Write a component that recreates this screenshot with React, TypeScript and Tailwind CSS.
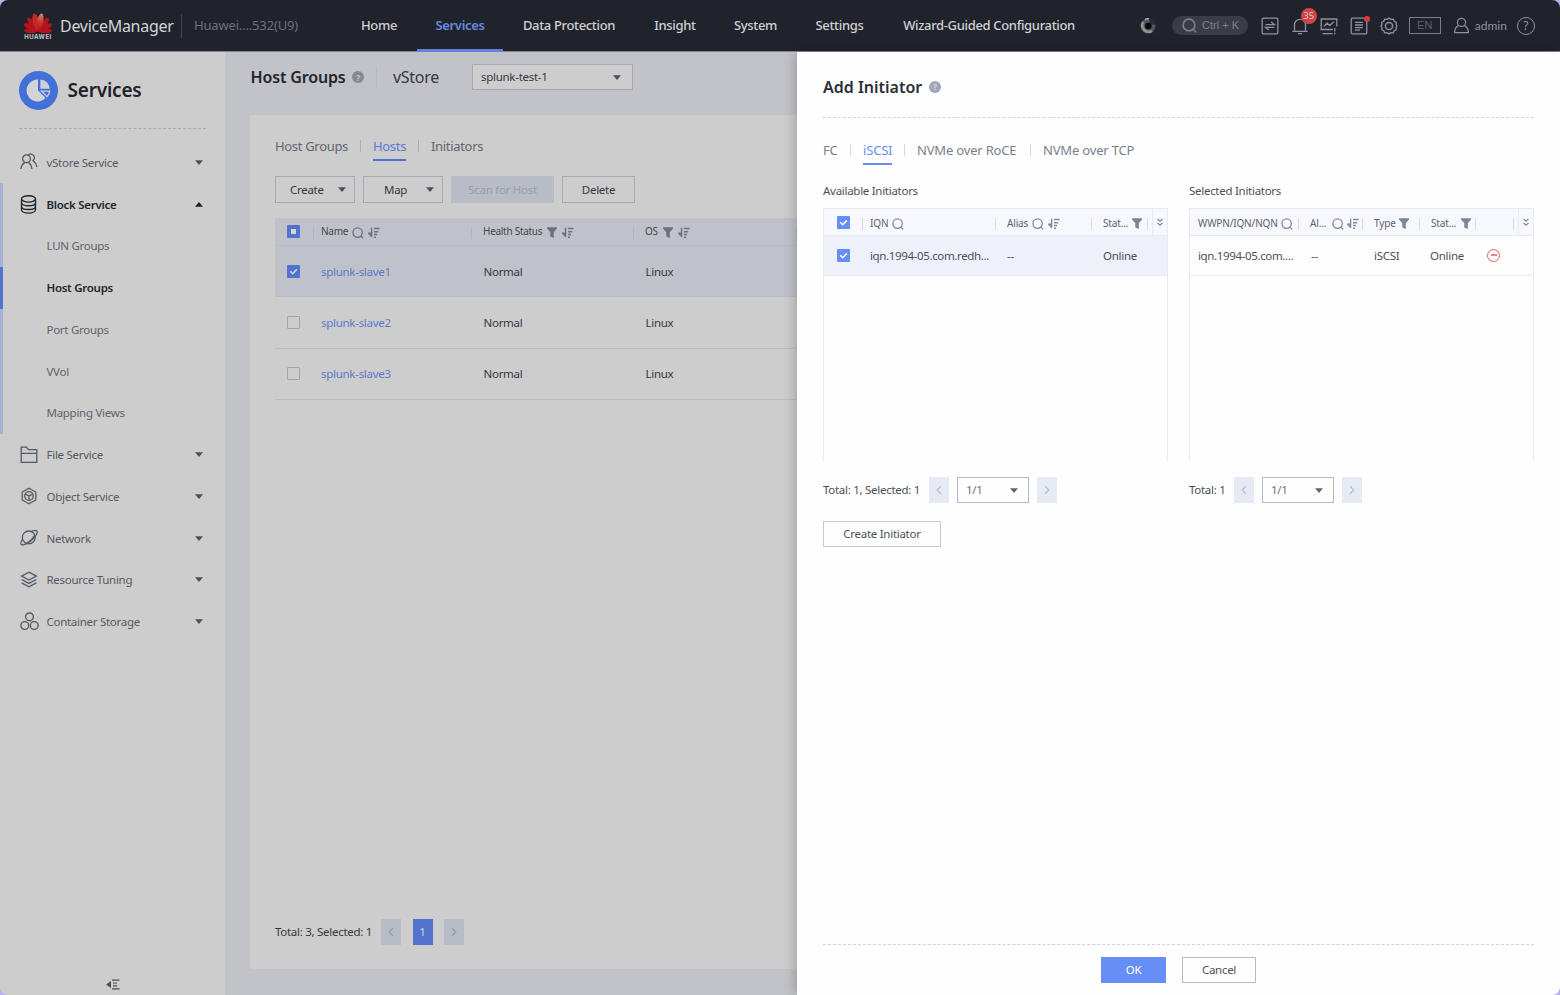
import type { ReactNode } from "react";
import clsx from "clsx";

// ---------- icons ----------

type IconProps = { className?: string };

const Svg = ({ className, box = "0 0 18 18", children }: { className?: string; box?: string; children: ReactNode }) => (
  <svg viewBox={box} fill="none" stroke="currentColor" strokeWidth="1.3" className={clsx("shrink-0", className)}>
    {children}
  </svg>
);

const Caret = ({ className, up }: IconProps & { up?: boolean }) => (
  <svg viewBox="0 0 8 5" fill="currentColor" className={clsx("w-2 h-[5px] shrink-0", up && "rotate-180", className)}>
    <path d="M0 0.3h8L4 5z" />
  </svg>
);

const SearchIcon = ({ className = "size-3" }: IconProps) => (
  <Svg box="0 0 12 12" className={className}>
    <circle cx="5.6" cy="5.6" r="4.7" />
    <path d="M8.8 9l2.4 2.4" />
  </Svg>
);

const FilterIcon = () => (
  <svg viewBox="0 0 10 11" fill="currentColor" className="w-2.5 h-[11px] shrink-0">
    <path d="M0 0.3h10v1.3L6.8 5.2V11L3.3 9.6V5.2L0 1.6z" />
  </svg>
);

const SortIcon = () => (
  <Svg box="0 0 12 11" className="w-3 h-[11px]">
    <path d="M3.6 0.8v9M3.8 9.8L0.6 6.2h3" strokeWidth="1.4" />
    <path d="M6 1.5h5.6M6 4.7h4.2M6 7.6h3M6 10.2h2" strokeWidth="1.5" />
  </Svg>
);

const HelpDot = () => (
  <span className="size-3 rounded-full bg-current flex items-center justify-center shrink-0">
    <span className="text-[9px] leading-none font-bold text-white/50">?</span>
  </span>
);

const DoubleChevron = () => (
  <Svg box="0 0 8 9" className="w-2 h-[9px]">
    <path d="M1.5 1L4 3.2 6.5 1M1.5 5L4 7.2 6.5 5" />
  </Svg>
);

const Chevron = ({ right }: { right?: boolean }) => (
  <Svg box="0 0 6 10" className={clsx("w-1.5 h-2.5", right && "rotate-180")}>
    <path d="M5 1L1.2 5 5 9" />
  </Svg>
);

const petal = "M14 19.6C10.2 14 10 3.4 13.4 1.2q.6-.4 1.200 0C18 3.400 17.800 14 14 19.600z";

const HuaweiLogo = () => (
  <div className="w-7 flex flex-col items-center">
    <svg viewBox="0 0 28 21" className="w-7 h-[21px]">
      <defs>
        <linearGradient id="petal" x1="0" y1="0" x2="0" y2="1">
          <stop offset="0" stopColor="#d08a72" />
          <stop offset="0.5" stopColor="#c4352a" />
          <stop offset="1" stopColor="#b3101c" />
        </linearGradient>
      </defs>
      <g fill="#b3141e">
        <path d={petal} transform="rotate(-86 14 19.6) translate(3.500 4.900) scale(.75)" />
        <path d={petal} transform="rotate(86 14 19.6) translate(3.500 4.900) scale(.75)" />
        <path d={petal} transform="rotate(-61 14 19.6) translate(2.100 2.900) scale(.85)" />
        <path d={petal} transform="rotate(61 14 19.6) translate(2.100 2.900) scale(.85)" />
        <path d={petal} transform="rotate(-37 14 19.6) translate(1 1.400) scale(.93)" />
        <path d={petal} transform="rotate(37 14 19.6) translate(1 1.400) scale(.93)" />
      </g>
      <path d={petal} transform="rotate(-12 14 19.6)" fill="#c22a26" />
      <path d={petal} transform="rotate(12 14 19.6)" fill="url(#petal)" />
    </svg>
    <span className="font-['Inter',sans-serif] font-bold text-[6px] leading-[7px] tracking-[0.55px] text-[#c9cacc]">HUAWEI</span>
  </div>
);

const TenantIcon = () => (
  <Svg className="size-[18px]">
    <circle cx="6.5" cy="5.8" r="3.9" />
    <path d="M0.9 16c.3-3 1.6-5 3.7-6.4M8.6 9.6c2 1.3 3 3.500 3.300 6.400M8 2.300C9 1 11 .8 12.400 1.500c2.300 1.200 2.800 4.200.6 6.200 2 1.200 3.400 3.300 3.900 6.300" />
  </Svg>
);

const DatabaseIcon = () => (
  <Svg className="size-[19px]">
    <ellipse cx="9" cy="3.7" rx="6.6" ry="3" />
    <path d="M2.4 3.7v10.500c0 1.700 3 3 6.600 3s6.600-1.300 6.600-3V3.700M2.400 7.400c0 1.700 3 2.800 6.600 2.800s6.600-1.100 6.600-2.800M2.400 10.900c0 1.700 3 2.800 6.600 2.800s6.600-1.100 6.600-2.800" />
  </Svg>
);

const FolderIcon = () => (
  <Svg className="size-[18px]">
    <path d="M1.2 16.4V1.2h5.3l1.9 2.500h8.400v12.700zM1.200 7.300h15.600" />
  </Svg>
);

const ObjectIcon = () => (
  <Svg className="size-[18px]">
    <path d="M9 1.2l6.800 3.800v8L9 16.800 2.200 13V5z" strokeLinejoin="round" />
    <circle cx="9" cy="9" r="4.3" />
    <path d="M5.200 7L9 8.900 12.800 7M9 8.900v4.400" />
  </Svg>
);

const PlanetIcon = () => (
  <Svg className="size-[18px]">
    <circle cx="8.8" cy="8.4" r="6.4" />
    <path d="M11.5 2.5C14.5.9 17 1 17.2 2.6c.3 2.600-3.500 7.300-7.700 10.300-3.800 2.700-7.700 3.700-8.500 2.200-.5-1 .2-2.900 1.500-4.800M14.800 6.200c-1.300 2.300-4 5.300-7.300 7.600" />
  </Svg>
);

const LayersIcon = () => (
  <Svg className="size-[18px]">
    <path d="M9 1.2l7.4 3.900L9 9 1.600 5.100zM1.600 8.500L9 12.400l7.400-3.900M1.600 11.900L9 15.800l7.400-3.900" />
  </Svg>
);

const ContainerIcon = () => (
  <Svg className="size-[19px]">
    <circle cx="9" cy="4.6" r="3.7" />
    <circle cx="4.5" cy="12.8" r="3.7" />
    <circle cx="13.5" cy="12.8" r="3.7" />
  </Svg>
);

const TransferIcon = () => (
  <Svg className="size-[18px]">
    <rect x="1.2" y="1.2" width="15.6" height="15.6" rx="1" />
    <path d="M4.5 7.600h9L10.200 5M13.500 10.400h-9L7.800 13" />
  </Svg>
);

const BellIcon = () => (
  <Svg className="size-[18px]">
    <path d="M1.5 14.300h15M3.500 14.300V8c0-3.400 2.400-5.600 5.500-5.600s5.500 2.200 5.500 5.600v6.300M7 16.600h4" />
  </Svg>
);

const MonitorIcon = () => (
  <Svg className="size-[18px]">
    <path d="M16.800 9.500V2H1.200v10.500h11.500M4 9.200l3.200-3 2.500 2.300L13.800 4.800M2.500 16.600h10.300M14.800 11v3.500M14.800 15.800v1.400" />
  </Svg>
);

const TaskIcon = () => (
  <Svg className="size-[18px]">
    <rect x="1.2" y="1.2" width="15.6" height="15.6" rx="1" />
    <path d="M5 5.400h8M5 8h8M5 10.600h8M5 13.200h5" />
  </Svg>
);

const GearIcon = () => (
  <Svg className="size-[18px]">
    <path d="M9 1.100l2 1.200 2.300-.2 1 2.100 2 1.100-.2 2.300L17 9l-.9 1.400.2 2.300-2 1.100-1 2.100-2.300-.2-2 1.200-2-1.200-2.300.2-1-2.100-2-1.100.2-2.300L1 9l.9-1.400-.2-2.300 2-1.100 1-2.100 2.300.2z" />
    <circle cx="9" cy="9" r="3.600" strokeWidth="1.500" />
  </Svg>
);

const UserIcon = () => (
  <Svg className="size-[17px]">
    <circle cx="9" cy="5.700" r="4.300" />
    <path d="M5.500 9.200C3 10.700 1.700 13 1.700 16.500h14.600c0-3.500-1.300-5.800-3.800-7.300" />
  </Svg>
);

// ---------- shared pieces ----------

const Divider = ({ className }: IconProps) => <span className={clsx("w-px h-3 shrink-0", className)} />;

const Checkbox = ({ state, dim }: { state: "on" | "off" | "partial"; dim?: boolean }) => (
  <span
    className={clsx(
      "size-[13px] rounded-[1px] shrink-0 flex items-center justify-center",
      state === "off" ? "border border-[#a3a4a8]" : dim ? "bg-[#5172cd]" : "bg-[#678ef7]"
    )}
  >
    {state === "partial" && <span className="size-[5px] bg-[#d2d4dc]" />}
    {state === "on" && (
      <svg viewBox="0 0 13 13" fill="none" stroke={dim ? "#d2d4dc" : "#fff"} strokeWidth="1.6" className="size-[13px]">
        <path d="M3.300 6.300l2.400 2.400 4.200-4.300" />
      </svg>
    )}
  </span>
);

type TabItem = { label: string; width: string };

const Tabs = ({ items, active, dim }: { items: TabItem[]; active: string; dim?: boolean }) => (
  <div className="flex h-6 items-start text-[13px] leading-[18px]">
    {items.map((t, i) => (
      <div key={t.label} className="flex items-start">
        {i > 0 && <Divider className={clsx("mx-3 mt-[3px]", dim ? "bg-[#acaeb8]" : "bg-[#d5d9e6]")} />}
        <span
          className={clsx(
            "h-6 whitespace-nowrap border-b-2",
            t.width,
            dim ? "tracking-[-0.32px]" : "tracking-[-0.18px]",
            t.label === active
              ? dim
                ? "text-[#5b7bd3] border-[#5172cd]"
                : "text-[#678ef7] border-[#678ef7]"
              : dim
                ? "text-[#63666e] border-transparent"
                : "text-[#7b7f8c] border-transparent"
          )}
        >
          {t.label}
        </span>
      </div>
    ))}
  </div>
);

const PageArrow = ({ right, dim }: { right?: boolean; dim?: boolean }) => (
  <span
    className={clsx(
      "w-5 h-[26px] flex items-center justify-center",
      dim ? "bg-[#b8bcc7] text-[#989ca8]" : "bg-[#e6eaf5] text-[#b9bfcf]"
    )}
  >
    <Chevron right={right} />
  </span>
);

// ---------- header ----------

const navItems = [
  { label: "Home", width: "w-[76px]" },
  { label: "Services", width: "w-[86px]" },
  { label: "Data Protection", width: "w-[132px]" },
  { label: "Insight", width: "w-[80px]" },
  { label: "System", width: "w-[81px]" },
  { label: "Settings", width: "w-[87px]" },
  { label: "Wizard-Guided Configuration", width: "w-[212px]" },
];

const Header = () => (
  <header className="h-[52px] flex items-center bg-[#20232b] border-b border-[#85878c] text-[#8f929c] shrink-0">
    <div className="w-[341px] flex items-center pl-6">
      <HuaweiLogo />
      <span className="ml-2 w-[114px] whitespace-nowrap text-[16px] tracking-[-0.28px] text-[#d3d4d7]">DeviceManager</span>
      <span className="ml-[7px] w-px h-6 bg-[#43464f]" />
      <span className="ml-3 whitespace-nowrap text-[13px] tracking-[-0.17px] text-[#6d717b]">Huawei....532(U9)</span>
    </div>
    <nav className="flex h-full text-[13px] tracking-[-0.34px]">
      {navItems.map((n) => (
        <span
          key={n.label}
          className={clsx(
            "flex items-center justify-center whitespace-nowrap pt-[3px] border-b-[3px] h-[52px]",
            n.width,
            n.label === "Services" ? "text-[#6888e0] font-semibold border-[#6381d6]" : "text-[#d0d1d4] font-medium border-transparent"
          )}
        >
          {n.label}
        </span>
      ))}
    </nav>
    <div className="flex-1 flex items-center pl-[45px]">
      <svg viewBox="0 0 16 16" className="size-4">
        <circle cx="8" cy="8" r="7.5" fill="#55565a" />
        <path d="M3.200 4a6.500 6.500 0 0 0 8.800 9" fill="none" stroke="#939496" strokeWidth="2.500" />
        <path d="M5 1.500a7.500 7.500 0 0 1 4-.8" fill="none" stroke="#a5a6a8" strokeWidth="1.500" />
        <path d="M9 .6a7.500 7.500 0 0 1 6.400 6.400L10 6z" fill="#2c2d32" />
        <circle cx="8.400" cy="8" r="3.300" fill="#08090b" />
      </svg>
      <span className="ml-4 w-[76px] h-[19px] rounded-full bg-[#3a3d47] flex items-center pl-[10px] gap-[5px] text-[#7d808b]">
        <SearchIcon className="size-[15px]" />
        <span className="font-['Liberation_Sans',sans-serif] text-[11px] whitespace-nowrap">Ctrl + K</span>
      </span>
      <span className="ml-[13px] flex items-center gap-[11.7px]">
        <TransferIcon />
        <span className="relative flex">
          <BellIcon />
          <span className="absolute left-[10px] top-[-9px] size-4 rounded-full bg-[#cf4347] text-[#e3c8ca] text-[9.5px] leading-4 text-center">35</span>
        </span>
        <MonitorIcon />
        <span className="relative flex">
          <TaskIcon />
          <span className="absolute right-[-2px] top-[-1px] size-1.5 rounded-full bg-[#dc3a3c]" />
        </span>
        <GearIcon />
      </span>
      <span className="ml-[11px] w-8 h-[17px] border border-[#7b7e89] flex items-center justify-center font-['Liberation_Sans',sans-serif] text-[11px] text-[#5d606b]">EN</span>
      <span className="ml-3 flex items-center gap-[5px]">
        <UserIcon />
        <span className="w-8 whitespace-nowrap font-['Lato',sans-serif] text-[12px]">admin</span>
      </span>
      <span className="ml-[10px] size-[18px] rounded-full border-[1.5px] border-[#8f929c] flex items-center justify-center text-[12px] leading-none">?</span>
    </div>
  </header>
);

// ---------- sidebar ----------

const blockItems = ["LUN Groups", "Host Groups", "Port Groups", "VVol", "Mapping Views"];

const otherServices = [
  { label: "File Service", icon: <FolderIcon /> },
  { label: "Object Service", icon: <ObjectIcon /> },
  { label: "Network", icon: <PlanetIcon /> },
  { label: "Resource Tuning", icon: <LayersIcon /> },
  { label: "Container Storage", icon: <ContainerIcon /> },
];

const ServiceRow = ({ label, icon, open }: { label: string; icon: ReactNode; open?: boolean }) => (
  <div className={clsx("h-[41.75px] flex items-center pr-[22px]", open ? "text-[#23252b] font-semibold" : "text-[#555962]")}>
    <span className={clsx("w-[46.5px] flex", open ? "pl-[19px]" : "pl-5")}>{icon}</span>
    <span className="flex-1 whitespace-nowrap">{label}</span>
    <Caret up={open} className={open ? "text-[#1c1e24]" : "text-[#4a4f5c]"} />
  </div>
);

const Sidebar = () => (
  <aside className="w-[225px] shrink-0 bg-[#cdcdcd] flex flex-col text-[11.5px] tracking-[-0.28px]">
    <div className="h-[76px] flex items-center pl-[19px]">
      <span className="size-[39px] rounded-full bg-[#4370d6] flex items-center justify-center">
        <svg viewBox="0 0 26 26" className="size-[26px]">
          <path d="M12 2.5v11l7.500 7.600A11 11 0 1 1 12 2.500z" fill="#d2d4d8" />
          <path d="M14.300 2.500v9.200h9.500A10 10 0 0 0 14.300 2.500z" fill="#cdd0d8" />
          <path d="M15.500 14.200h8.200a9.500 9.500 0 0 1-2.700 5.500z" fill="none" stroke="#cdd0d8" strokeWidth="1.3" />
        </svg>
      </span>
      <span className="ml-[9.5px] text-[19px] tracking-[-0.2px] font-semibold text-[#202228]">Services</span>
    </div>
    <div className="mx-[19px] mb-[12.5px] border-t border-dashed border-[#a9abb8]" />
    <ServiceRow label="vStore Service" icon={<TenantIcon />} />
    <div className="relative">
      <ServiceRow label="Block Service" icon={<DatabaseIcon />} open />
      <span className="absolute inset-y-0 left-0 w-[3px] bg-[#a7b1d4]" />
      {blockItems.map((label) => (
        <div
          key={label}
          className={clsx(
            "relative h-[41.75px] flex items-center pl-[43.5px] border-l-[3px]",
            label === "Host Groups" ? "border-[#5172cd] text-[#23252b] font-semibold" : "border-[#a7b1d4] text-[#5f636b]"
          )}
        >
          {label}
        </div>
      ))}
    </div>
    {otherServices.map((s) => (
      <ServiceRow key={s.label} label={s.label} icon={s.icon} />
    ))}
    <div className="mt-auto flex justify-center pb-[5px] text-[#4a4f5c]">
      <svg viewBox="0 0 14 11" className="w-3.5 h-[11px]" fill="currentColor">
        <path d="M0 5.500L5 2v7zM6 .5h7.500v1.300H6zM7 3.400h4v1.200H7zM7 6.300h4v1.200H7zM6 9.200h7.500v1.300H6z" />
      </svg>
    </div>
  </aside>
);

// ---------- host list ----------

const hosts = [
  { name: "splunk-slave1", checked: true },
  { name: "splunk-slave2", checked: false },
  { name: "splunk-slave3", checked: false },
];

const hostTabs: TabItem[] = [
  { label: "Host Groups", width: "w-[73px]" },
  { label: "Hosts", width: "w-[33px]" },
  { label: "Initiators", width: "w-[52px]" },
];

const HostTable = () => (
  <div className="mt-[15px]">
    <div className="h-7 flex items-center bg-[#c0c2ca] border-b border-[#bbbdc6] text-[10px] text-[#43464e]">
      <span className="w-[38px] pl-3"><Checkbox state="partial" dim /></span>
      <Divider className="mt-0.5 bg-[#b2b4bd]" />
      <span className="w-[157px] pl-[7px] flex items-center gap-1">
        <span className="w-[27px]">Name</span>
        <span className="flex items-center gap-1 pt-0.5 text-[#6c7080]"><SearchIcon /><SortIcon /></span>
      </span>
      <Divider className="mt-0.5 bg-[#b2b4bd]" />
      <span className="w-[161px] pl-[11px] flex items-center gap-1">
        <span className="w-[60px] whitespace-nowrap">Health Status</span>
        <span className="flex items-center gap-[5px] pt-0.5 text-[#6c7080]"><FilterIcon /><SortIcon /></span>
      </span>
      <Divider className="mt-0.5 bg-[#b2b4bd]" />
      <span className="w-[162px] pl-[11px] flex items-center gap-1">
        <span className="w-[14px]">OS</span>
        <span className="flex items-center gap-[5px] pt-0.5 text-[#6c7080]"><FilterIcon /><SortIcon /></span>
      </span>
      <Divider className="mt-0.5 bg-[#b2b4bd]" />
    </div>
    {hosts.map((h) => (
      <div key={h.name} className={clsx("h-[51.4px] flex items-center border-b border-[#bbbec9]", h.checked && "bg-[#c0c2ca]")}>
        <span className="w-[46px] pl-3"><Checkbox state={h.checked ? "on" : "off"} dim /></span>
        <span className="w-[162.5px] text-[#5b78cb]">{h.name}</span>
        <span className="w-[162px]">Normal</span>
        <span>Linux</span>
      </div>
    ))}
  </div>
);

const HostPage = () => (
  <main className="w-[572px] shrink-0 bg-[#c2c3c9] flex flex-col pl-[25px] pb-[26px] overflow-hidden text-[11.5px] tracking-[-0.28px] text-[#35383f]">
    <div className="h-[63px] flex items-start pt-3">
      <div className="flex items-center h-[26px]">
        <span className="w-[95px] pl-[0.5px] whitespace-nowrap text-[16px] tracking-[-0.15px] font-semibold text-[#23252b]">Host Groups</span>
        <span className="ml-[7px] text-[#858893]"><HelpDot /></span>
        <span className="ml-3 w-px h-[22px] bg-[#b6b8c2]" />
        <span className="ml-4 w-[46px] text-[16px]">vStore</span>
        <span className="ml-[33px] w-[161px] h-[26px] border border-[#a5a8b5] bg-[#cdcdcd] flex items-center justify-between pl-2 pr-[11px]">
          splunk-test-1
          <Caret className="text-[#4a4f5c]" />
        </span>
      </div>
    </div>
    <section className="flex-1 bg-[#cdcdcd] pl-[25px] pt-[22px] flex flex-col">
      <Tabs items={hostTabs} active="Hosts" dim />
      <div className="mt-[15px] flex gap-2">
        <span className="w-20 h-[27px] border border-[#a5a8b5] flex items-center justify-between pl-[14px] pr-2">
          Create <Caret className="text-[#4a4f5c]" />
        </span>
        <span className="w-20 h-[27px] border border-[#a5a8b5] flex items-center justify-between pl-5 pr-2">
          Map <Caret className="text-[#4a4f5c]" />
        </span>
        <span className="w-[103px] h-[27px] bg-[#b8bcc7] flex items-center justify-center text-[#999da8]">Scan for Host</span>
        <span className="w-[73px] h-[27px] border border-[#a5a8b5] flex items-center justify-center">Delete</span>
      </div>
      <HostTable />
      <div className="mt-auto pb-6 flex items-center">
        <span className="w-[98px] whitespace-nowrap">Total: 3, Selected: 1</span>
        <span className="ml-2 flex gap-[11.5px]">
          <PageArrow dim />
          <span className="w-5 h-[26px] bg-[#5172cd] text-[#cfd3de] flex items-center justify-center">1</span>
          <PageArrow right dim />
        </span>
      </div>
    </section>
  </main>
);

// ---------- drawer ----------

const initiatorTabs: TabItem[] = [
  { label: "FC", width: "w-[15px]" },
  { label: "iSCSI", width: "w-[29px]" },
  { label: "NVMe over RoCE", width: "w-[101px]" },
  { label: "NVMe over TCP", width: "w-[92px]" },
];

const HeadDivider = ({ className }: IconProps) => <Divider className={clsx("mt-[3px] bg-[#d5d9e6]", className)} />;

const Pager = ({ summary, width }: { summary: string; width: string }) => (
  <div className="mt-4 flex items-center">
    <span className={clsx("whitespace-nowrap", width)}>{summary}</span>
    <span className="ml-2 flex gap-2">
      <PageArrow />
      <span className="w-[72px] h-[26px] border border-[#b3bacb] flex items-center justify-between pl-2 pr-[10px] text-[#6c7080]">
        1/1
        <Caret className="text-[#5d6475]" />
      </span>
      <PageArrow right />
    </span>
  </div>
);

const AvailableTable = () => (
  <div className="w-[345px] h-[253px] border border-b-0 border-[#e6eaf5]">
    <div className="h-[27px] flex items-center bg-[#f7f8fd] border-b border-[#e6eaf5] text-[10px] tracking-[-0.15px] text-[#5d616c]">
      <span className="w-[38px] pl-[12.5px]"><Checkbox state="on" /></span>
      <HeadDivider />
      <span className="w-[132px] pt-[3px] pl-[7px] flex items-center gap-[5px]">
        <span className="w-[17px]">IQN</span>
        <span className="text-[#858a9b]"><SearchIcon /></span>
      </span>
      <HeadDivider />
      <span className="w-[95px] pt-[3px] pl-[11px] flex items-center gap-[5px]">
        <span className="w-5">Alias</span>
        <span className="flex items-center gap-1 text-[#858a9b]"><SearchIcon /><SortIcon /></span>
      </span>
      <HeadDivider />
      <span className="w-[55px] pt-[3px] pl-[11px] flex items-center gap-1">
        <span className="w-[25px]">Stat...</span>
        <span className="text-[#7f8599]"><FilterIcon /></span>
      </span>
      <HeadDivider />
      <span className="ml-1 flex-1 h-full border-l border-[#e6eaf5] flex items-center justify-center text-[#858a9b]"><DoubleChevron /></span>
    </div>
    <div className="h-[39.5px] flex items-center bg-[#eef1fa] border-b border-[#e6eaf5]">
      <span className="w-[46px] pl-[12.5px]"><Checkbox state="on" /></span>
      <span className="w-[137px] whitespace-nowrap tracking-[-0.36px]">iqn.1994-05.com.redh...</span>
      <span className="w-[96px]">--</span>
      <span>Online</span>
    </div>
  </div>
);

const SelectedTable = () => (
  <div className="w-[345px] h-[253px] border border-b-0 border-[#e6eaf5]">
    <div className="h-[27px] flex items-center bg-[#f7f8fd] border-b border-[#e6eaf5] text-[10px] tracking-[-0.15px] text-[#5d616c]">
      <span className="w-[108px] pt-[3px] pl-2 flex items-center gap-1">
        <span className="w-[79px] whitespace-nowrap">WWPN/IQN/NQN</span>
        <span className="text-[#858a9b]"><SearchIcon /></span>
      </span>
      <HeadDivider />
      <span className="w-[63px] pt-[3px] pl-[11px] flex items-center gap-[5px]">
        <span className="w-[17px]">Al...</span>
        <span className="flex items-center gap-[3px] text-[#858a9b]"><SearchIcon /><SortIcon /></span>
      </span>
      <HeadDivider />
      <span className="w-[56px] pt-[3px] pl-[11px] flex items-center gap-1">
        <span className="w-[21px]">Type</span>
        <span className="text-[#7f8599]"><FilterIcon /></span>
      </span>
      <HeadDivider />
      <span className="w-[55px] pt-[3px] pl-[11px] flex items-center gap-1">
        <span className="w-[26px]">Stat...</span>
        <span className="text-[#7f8599]"><FilterIcon /></span>
      </span>
      <HeadDivider />
      <HeadDivider className="ml-[37px]" />
      <span className="ml-1 flex-1 h-full border-l border-[#e6eaf5] flex items-center justify-center text-[#858a9b]"><DoubleChevron /></span>
    </div>
    <div className="h-[39.5px] flex items-center border-b border-[#e6eaf5]">
      <span className="w-[121px] pl-2 whitespace-nowrap tracking-[-0.36px]">iqn.1994-05.com....</span>
      <span className="w-[63px]">--</span>
      <span className="w-[56px]">iSCSI</span>
      <span className="w-[57px]">Online</span>
      <span className="size-[13px] rounded-full border-[1.5px] border-[#f0595c] flex items-center justify-center text-[#f0595c]">
        <Svg box="0 0 6 2" className="w-1.5 h-0.5">
          <path d="M0 1h6" strokeWidth="1.5" />
        </Svg>
      </span>
    </div>
  </div>
);

const Drawer = () => (
  <section className="relative flex-1 bg-[#fefefe] px-[26px] flex flex-col text-[11.5px] tracking-[-0.28px] text-[#4c505a] shadow-[-2px_0_12px_rgba(0,0,0,0.22)]">
    <div className="h-[66px] flex items-center pt-1 border-b border-dashed border-[#cfd3e0]">
      <span className="w-[99px] whitespace-nowrap text-[16px] tracking-normal font-semibold text-[#2b2e36]">Add Initiator</span>
      <span className="ml-[7px] text-[#a2a6b5]"><HelpDot /></span>
    </div>
    <div className="mt-[23px]">
      <Tabs items={initiatorTabs} active="iSCSI" />
    </div>
    <div className="mt-[17px] flex gap-[21px]">
      <div>
        <p className="h-[26px] leading-[18px]">Available Initiators</p>
        <AvailableTable />
        <Pager summary="Total: 1, Selected: 1" width="w-[98px]" />
        <span className="mt-[18px] w-[118px] h-[26px] border border-[#c3c9d8] flex items-center justify-center">Create Initiator</span>
      </div>
      <div>
        <p className="h-[26px] leading-[18px]">Selected Initiators</p>
        <SelectedTable />
        <Pager summary="Total: 1" width="w-[37px]" />
      </div>
    </div>
    <div className="mt-auto h-[51px] flex justify-center gap-4 pt-3 border-t border-dashed border-[#cfd3e0]">
      <span className="w-[65px] h-[26px] bg-[#678ef7] text-white flex items-center justify-center">OK</span>
      <span className="w-[74px] h-[26px] border border-[#b3bacb] flex items-center justify-center">Cancel</span>
    </div>
  </section>
);

const App = () => (
  <div className="w-[1560px] h-[995px] bg-[#b9b0ee] font-['Noto_Sans',sans-serif]">
    <div className="h-full flex flex-col rounded-lg overflow-hidden">
      <Header />
      <div className="flex-1 flex">
        <Sidebar />
        <HostPage />
        <Drawer />
      </div>
    </div>
  </div>
);

export default App;
